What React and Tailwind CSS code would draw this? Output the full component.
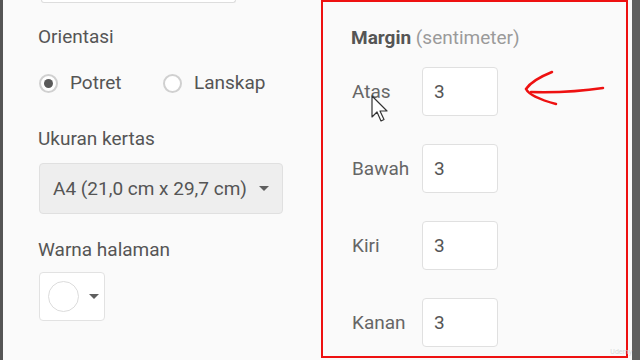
import React from "react";

const MARGINS = [
  { label: "Atas", value: "3" },
  { label: "Bawah", value: "3" },
  { label: "Kiri", value: "3" },
  { label: "Kanan", value: "3" },
];

function Caret() {
  return <span className="inline-block w-0 h-0 border-x-[5px] border-x-transparent border-t-[5px] border-t-[#5f5f5f]" />;
}

function Radio({ checked, label, className = "" }) {
  return (
    <div className={`flex items-center gap-3 ${className}`}>
      <span className="w-[19px] h-[19px] rounded-full border-2 border-[#d0d0d0] bg-white flex items-center justify-center">
        {checked && <span className="w-[9px] h-[9px] rounded-full bg-[#5a5a5a]" />}
      </span>
      <span>{label}</span>
    </div>
  );
}

export default function App() {
  return (
    <div
      className="relative w-[640px] h-[360px] overflow-hidden flex bg-[#fafafa] text-[19px] leading-6 text-[#555]"
      style={{ fontFamily: "Roboto, 'Liberation Sans', sans-serif" }}
    >
      <div className="w-[3px] h-full bg-[#555] shrink-0" />

      {/* left column */}
      <div className="w-[318px] shrink-0 pl-[35px] flex flex-col">
        <div className="ml-[3px] w-[195px] h-[3px] bg-white border border-t-0 border-[#ddd] rounded-b" />
        <div className="mt-[22px]">Orientasi</div>
        <div className="mt-[22px] flex items-center">
          <Radio checked label="Potret" className="ml-[1px] w-[124px]" />
          <Radio label="Lanskap" />
        </div>
        <div className="mt-[32px]">Ukuran kertas</div>
        <div className="mt-[12px] ml-[1px] w-[244px] h-[51px] rounded bg-[#eeeeee] border border-[#e0e0e0] flex items-center pl-[13px] pr-[13px]">
          <span className="flex-1">A4 (21,0 cm x 29,7 cm)</span>
          <Caret />
        </div>
        <div className="mt-[24px]">Warna halaman</div>
        <div className="mt-[10px] ml-[1px] w-[66px] h-[49px] rounded bg-white border border-[#e2e2e2] flex items-center pl-[8px] gap-[10px]">
          <span className="w-[31px] h-[31px] rounded-full border border-[#dcdcdc] bg-white" />
          <Caret />
        </div>
      </div>

      {/* margin panel */}
      <div className="w-[307px] h-[358px] shrink-0 border-[2.5px] border-[#ee1111] pl-[28px] pt-[24px] flex flex-col">
        <div>
          <span className="font-bold">Margin</span>{" "}
          <span className="text-[#9a9a9a]">(sentimeter)</span>
        </div>
        <div className="mt-[17px] flex flex-col gap-[28px]">
          {MARGINS.map((m) => (
            <div key={m.label} className="flex items-center pl-[1px]">
              <span className="w-[70px] text-[#666]">{m.label}</span>
              <div className="w-[76px] h-[49px] rounded bg-white border border-[#e0e0e0] flex items-center pl-[11px]">
                {m.value}
              </div>
            </div>
          ))}
        </div>
      </div>

      <div className="w-[4px] shrink-0" />
      <div className="flex-1 h-full bg-[#5f5f5f]" />

      {/* annotation arrow */}
      <svg className="absolute left-0 top-0 pointer-events-none" width="640" height="360" viewBox="0 0 640 360">
        <path d="M552 72 Q532 80 526 89 Q530 97 556 104" fill="none" stroke="#ee1111" strokeWidth="2.5" strokeLinecap="round" />
        <path d="M531 92 Q570 93 603 88" fill="none" stroke="#ee1111" strokeWidth="2.5" strokeLinecap="round" />
        {/* mouse cursor */}
        <path
          d="M372 96 L372 117 L377 112 L381 121 L384 119.5 L380 111 L387 111 Z"
          fill="#fff"
          stroke="#333"
          strokeWidth="1.2"
          strokeLinejoin="round"
        />
      </svg>

      <span className="absolute right-[8px] bottom-[4px] text-[7px] leading-none text-[#d8d8d8]">Udemy</span>
    </div>
  );
}
